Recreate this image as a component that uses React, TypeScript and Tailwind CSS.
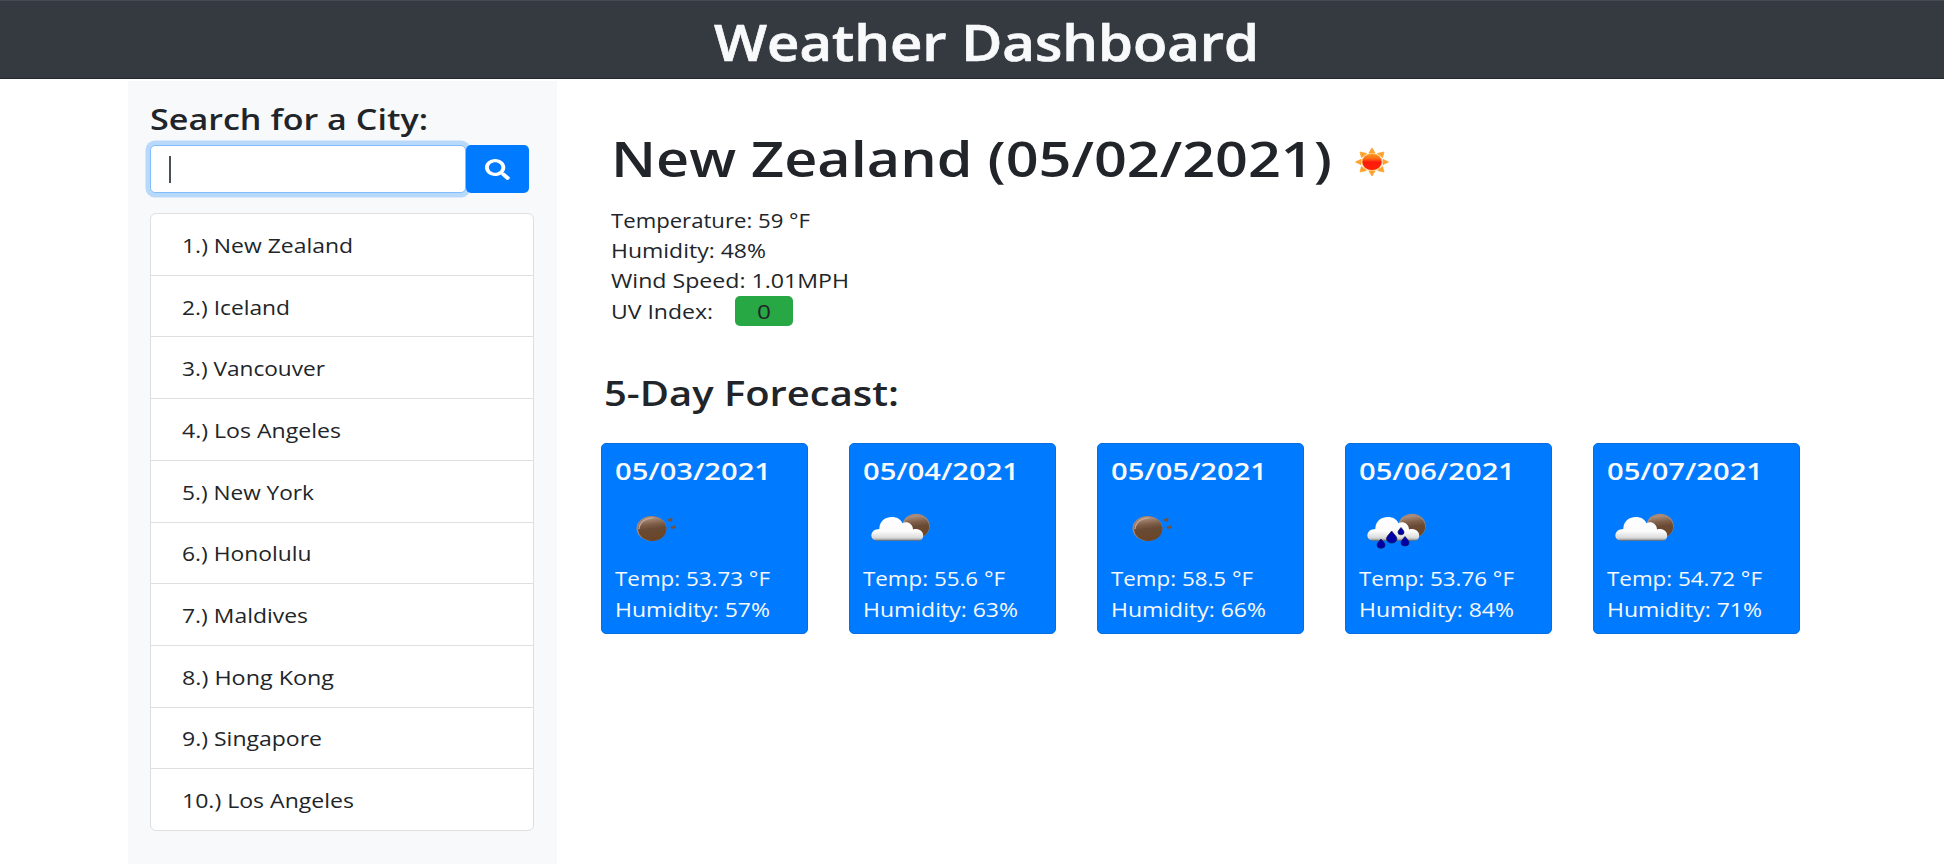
import { useLayoutEffect, useRef } from "react";

const cities: [string, number][] = [
  ["1.) New Zealand", 171],
  ["2.) Iceland", 108],
  ["3.) Vancouver", 143],
  ["4.) Los Angeles", 159],
  ["5.) New York", 132],
  ["6.) Honolulu", 129.5],
  ["7.) Maldives", 126],
  ["8.) Hong Kong", 152],
  ["9.) Singapore", 140],
  ["10.) Los Angeles", 172],
];

type Sky = "night" | "cloud" | "rain";

const days: { date: string; sky: Sky; temp: [string, number]; humidity: string }[] = [
  { date: "05/03/2021", sky: "night", temp: ["Temp: 53.73 °F", 155], humidity: "Humidity: 57%" },
  { date: "05/04/2021", sky: "cloud", temp: ["Temp: 55.6 °F", 142], humidity: "Humidity: 63%" },
  { date: "05/05/2021", sky: "night", temp: ["Temp: 58.5 °F", 142], humidity: "Humidity: 66%" },
  { date: "05/06/2021", sky: "rain", temp: ["Temp: 53.76 °F", 155], humidity: "Humidity: 84%" },
  { date: "05/07/2021", sky: "cloud", temp: ["Temp: 54.72 °F", 155], humidity: "Humidity: 71%" },
];

/** One line of text, stretched horizontally so that it fills `width` pixels. */
function FitText({ text, width }: { text: string; width: number }) {
  const ref = useRef<HTMLSpanElement>(null);
  useLayoutEffect(() => {
    const el = ref.current;
    if (!el) return;
    el.style.transform = "none";
    const natural = el.getBoundingClientRect().width;
    el.style.transform = `scaleX(${width / natural})`;
  }, [text, width]);
  return (
    <span className="block shrink-0" style={{ width }}>
      <span ref={ref} className="inline-block origin-left whitespace-nowrap">
        {text}
      </span>
    </span>
  );
}

function SearchIcon() {
  return (
    <svg className="h-[21px] w-[25px]" viewBox="0 0 512 512" preserveAspectRatio="none" fill="currentColor">
      <path d="M505 442.7L405.3 343c-4.500-4.500-10.600-7-17-7H372c27.600-35.300 44-79.700 44-128C416 93.100 322.900 0 208 0S0 93.100 0 208s93.100 208 208 208c48.300 0 92.700-16.400 128-44v16.300c0 6.400 2.500 12.500 7 17l99.700 99.700c9.400 9.400 24.600 9.400 33.900 0l28.300-28.300c9.400-9.400 9.400-24.600.1-34zM208 336c-70.700 0-128-57.200-128-128 0-70.700 57.200-128 128-128 70.700 0 128 57.200 128 128 0 70.700-57.200 128-128 128z" />
    </svg>
  );
}

function SunIcon() {
  return (
    <svg className="h-[30px] w-[36px]" viewBox="-18 -15 36 30">
      <defs>
        <linearGradient id="sunBody" x1="0" y1="0" x2="0" y2="1">
          <stop offset="0" stopColor="#ff9a1f" />
          <stop offset="0.3" stopColor="#ff6a18" />
          <stop offset="0.5" stopColor="#fb1a0b" />
          <stop offset="1" stopColor="#ff2206" />
        </linearGradient>
      </defs>
      <g fill="#fba22d" stroke="#fba22d" strokeWidth="0.800">
        <path d="M-3-9L0-14L3-9Z" />
        <path d="M-3 9L0 14L3 9Z" />
        <path d="M-11-2.600L-16.500 0L-11 2.600Z" />
        <path d="M11-2.600L16.500 0L11 2.600Z" />
        <path d="M-10.500-4.500L-12-10L-5.500-8.500Z" />
        <path d="M10.500-4.500L12-10L5.500-8.500Z" />
        <path d="M-10.500 4.500L-12 10L-5.500 8.500Z" />
        <path d="M10.500 4.500L12 10L5.500 8.500Z" />
      </g>
      <ellipse rx="10.400" ry="8.900" fill="#ffc069" />
      <ellipse rx="9.600" ry="8.100" fill="url(#sunBody)" />
    </svg>
  );
}

function SkyIcon({ sky, id }: { sky: Sky; id: string }) {
  const disc = `${id}-disc`;
  const cloud = `${id}-cloud`;
  return (
    <svg className="h-[62px] w-[76px]" viewBox="0 0 76 62">
      <defs>
        <linearGradient id={disc} x1="0.350" y1="0" x2="0.500" y2="1">
          <stop offset="0" stopColor="#b39684" />
          <stop offset="0.300" stopColor="#80604a" />
          <stop offset="0.500" stopColor="#694a34" />
          <stop offset="1" stopColor="#6b4526" />
        </linearGradient>
        <linearGradient id={cloud} x1="0" y1="0" x2="0" y2="1">
          <stop offset="0" stopColor="#ffffff" />
          <stop offset="0.600" stopColor="#fbfbfb" />
          <stop offset="0.850" stopColor="#dedede" />
          <stop offset="0.930" stopColor="#bcbcbc" />
          <stop offset="1" stopColor="#66645f" />
        </linearGradient>
      </defs>
      {sky === "night" ? (
        <g>
          <ellipse cx="35.500" cy="31.500" rx="15" ry="12.500" fill="#a58370" />
          <ellipse cx="36.300" cy="32" rx="14.100" ry="11.900" fill={`url(#${disc})`} />
          <path d="M23 32C23.500 25 30 20.800 37 20.800" fill="none" stroke="#c2a797" strokeWidth="1.300" />
          <path d="M51.500 22.200L56.500 20.500L56 24.800L52.500 24.300Z" fill="#74523c" />
          <path d="M54.300 30L58.800 28.200L60 30.800L56 32Z" fill="#74523c" />
        </g>
      ) : (
        <g>
          <ellipse cx="52" cy="29" rx="13.700" ry="12.200" fill="#a58a78" />
          <ellipse cx="52.400" cy="29.700" rx="12.800" ry="11.300" fill={`url(#${disc})`} />
          <path
            d="M14 43.800C4.500 43.800 5.500 32 15.300 32C15.500 23.500 22 20 27.500 20C33 20 36.500 22 38.500 26.300C42.500 23.700 49 26.500 49 32.500C54 31 59.200 34 59.200 38.500C59.200 42 57 43.800 53.500 43.800Z"
            fill={`url(#${cloud})`}
          />
          {sky === "rain" && (
            <g fill="#0000a8" stroke="#12124c" strokeWidth="0.700">
              <path d="M21 42C19 44.500 17 46 17 48A4 3.300 0 0 0 25 48C25 46 23 44.500 21 42Z" />
              <path d="M31.700 34C29 37.500 26.500 39.500 26.500 41.800A5.200 4.200 0 0 0 36.900 41.800C36.900 39.500 34 37.500 31.700 34Z" />
              <path d="M41 30.500C39.500 32.500 38 33.700 38 35.300A3 2.500 0 0 0 44 35.300C44 33.700 42.500 32.500 41 30.500Z" />
              <path d="M45 39.500C43 42 41 43.700 41 45.700A4 3.300 0 0 0 49 45.700C49 43.700 47 42 45 39.500Z" />
            </g>
          )}
        </g>
      )}
    </svg>
  );
}

export default function App() {
  return (
    <div className="flex h-[864px] w-[1944px] flex-col overflow-hidden bg-white font-['Open_Sans','Noto_Sans',sans-serif] text-[#212529]">
      <header className="flex h-[79px] shrink-0 justify-center border-t border-b border-t-[#454b52] border-b-[#1f262d] bg-[#343a40] pt-[6px] pl-[28px]">
        <h1 className="text-[50px] leading-[70px] font-semibold text-[#f8f9fa] [-webkit-text-stroke:0.7px_#f8f9fa]">
          <FitText text="Weather Dashboard" width={545} />
        </h1>
      </header>

      <div className="flex min-h-0 flex-1">
        <aside className="mt-[2px] ml-[128px] w-[429px] shrink-0 bg-[#f8f9fa] px-[22px]">
          <h3 className="mt-[18px] text-[29px] leading-[40px] font-semibold">
            <FitText text="Search for a City:" width={278} />
          </h3>
          <div className="mt-[6px] flex h-[48px] w-[379px]">
            <div className="flex w-[316px] items-center rounded-[5px] border border-[#80bdff] bg-white pl-[18px] ring-[4.500px] ring-[#b9d9fb]">
              <span className="h-[27px] w-[1.500px] bg-[#495057]" />
            </div>
            <button className="flex w-[63px] items-center justify-center rounded-[5px] bg-[#007bff] text-white">
              <SearchIcon />
            </button>
          </div>
          <ul className="mt-[20px] flex h-[618px] w-[384px] flex-col divide-y divide-[#dfdfdf] rounded-[6px] border border-[#dfdfdf] bg-white text-[20.500px] leading-[30px]">
            {cities.map(([name, width], i) => (
              <li key={i} className="flex flex-1 items-center pt-px pl-[31px]">
                <FitText text={name} width={width} />
              </li>
            ))}
          </ul>
        </aside>

        <main className="ml-[44px] w-[1300px]">
          <div className="flex items-center pt-[43px] pl-[10px]">
            <h1 className="text-[49px] leading-[72px] font-semibold">
              <FitText text="New Zealand (05/02/2021)" width={721} />
            </h1>
            <div className="mt-[7px] ml-[22px]">
              <SunIcon />
            </div>
          </div>
          <div className="mt-[11px] pl-[10px] text-[20.500px] leading-[30.200px]">
            <FitText text="Temperature: 59 °F" width={199} />
            <FitText text="Humidity: 48%" width={155} />
            <FitText text="Wind Speed: 1.01MPH" width={238} />
            <div className="flex">
              <FitText text="UV Index:" width={102} />
              <div className="ml-[22px] flex w-[58px] justify-center rounded-[5px] bg-[#28a745]">
                <FitText text="0" width={14} />
              </div>
            </div>
          </div>
          <h2 className="mt-[44.400px] pl-[3px] text-[34px] leading-[46px] font-semibold">
            <FitText text="5-Day Forecast:" width={295} />
          </h2>
          <div className="mt-[27px] flex gap-[41px]">
            {days.map((day) => (
              <section
                key={day.date}
                className="flex h-[191px] w-[207px] shrink-0 flex-col rounded-[5px] border border-[#066ee0] bg-[#007bff] pl-[13px] text-[20.500px] leading-[30.300px] text-[#f8f9fa]"
              >
                <h5 className="mt-[10px] text-[24px] leading-[34px] font-semibold">
                  <FitText text={day.date} width={156} />
                </h5>
                <div className="mt-[9px] mb-[4px] ml-px h-[62px]">
                  <SkyIcon sky={day.sky} id={day.date.replaceAll("/", "")} />
                </div>
                <FitText text={day.temp[0]} width={day.temp[1]} />
                <FitText text={day.humidity} width={155} />
              </section>
            ))}
          </div>
        </main>
      </div>
    </div>
  );
}
